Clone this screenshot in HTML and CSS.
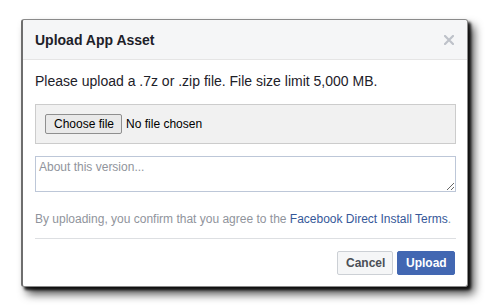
FILE: index.html
```html
<!DOCTYPE html>
<html>
<head>
<meta charset="utf-8">
<link rel="stylesheet" href="styles.css">
</head>
<body>
<div class="dialog">
  <div class="header">
    <span class="title">Upload App Asset</span>
    <svg class="close" width="10" height="10" viewBox="0 0 10 10" aria-label="Close">
      <path d="M1 1 L9 9 M9 1 L1 9" stroke="#bec2c9" stroke-width="2.2" stroke-linecap="square"/>
    </svg>
  </div>
  <div class="body">
    <p class="intro">Please upload a .7z or .zip file. File size limit 5,000 MB.</p>
    <div class="filebox">
      <span class="choose">Choose file</span>
      <span class="nofile">No file chosen</span>
    </div>
    <textarea class="notes" placeholder="About this version..."></textarea>
    <p class="terms">By uploading, you confirm that you agree to the <a href="#">Facebook Direct Install Terms</a>.</p>
    <div class="footer">
      <button class="btn cancel">Cancel</button>
      <button class="btn upload">Upload</button>
    </div>
  </div>
</div>
</body>
</html>
```
FILE: styles.css
```css
html, body {
  margin: 0;
  padding: 0;
  background: #ffffff;
}
body {
  font-family: "Liberation Sans", Arial, sans-serif;
  padding: 19px 0 0 21px;
  min-height: 307px;
  box-sizing: border-box;
}
.dialog {
  width: 444px;
  height: 266px;
  background: #fff;
  border: 1px solid #8a8a8a;
  border-left: 2px solid #6e6e6e;
  border-radius: 3px;
  box-shadow: 3px 3px 3px rgba(0,0,0,0.85), 6px 7px 10px rgba(0,0,0,0.7);
  display: flex;
  flex-direction: column;
  box-sizing: content-box;
}
.header {
  height: 39px;
  background: #f5f6f7;
  border-bottom: 1px solid #e5e5e5;
  border-radius: 3px 3px 0 0;
  display: flex;
  align-items: center;
  justify-content: space-between;
  padding: 0 13px 0 12px;
}
.title {
  font-weight: bold;
  font-size: 14px;
  color: #1d2129;
}
.close {
  display: block;
}
.body {
  padding: 12px 11px 0 12px;
  display: flex;
  flex-direction: column;
}
.intro {
  margin: 0;
  font-size: 14px;
  line-height: 18px;
  color: #1d2129;
}
.filebox {
  margin-top: 14px;
  height: 38px;
  background: #f1f1f1;
  border: 1px solid #cccccc;
  display: flex;
  align-items: center;
  padding-left: 9px;
}
.choose {
  font-size: 12px;
  color: #000;
  background: #e9e9e9;
  border: 1px solid #8f8f8f;
  border-radius: 2px;
  padding: 2px 7px 2px 8px;
  line-height: 14px;
}
.nofile {
  font-size: 12px;
  color: #000;
  margin-left: 4px;
}
.notes {
  margin: 12px 0 0 0;
  height: 36px;
  box-sizing: border-box;
  border: 1px solid #bdc7d8;
  border-radius: 0;
  padding: 3px 3px;
  font-family: "Liberation Sans", Arial, sans-serif;
  font-size: 12px;
  color: #1d2129;
  width: 100%;
  outline: none;
}
.notes::placeholder {
  color: #90949c;
}
.terms {
  margin: 19px 0 0 0;
  font-size: 12px;
  line-height: 16px;
  color: #90949c;
}
.terms a {
  color: #365899;
  text-decoration: none;
}
.footer {
  margin-top: 11px;
  border-top: 1px solid #dddfe2;
  padding-top: 12px;
  display: flex;
  justify-content: flex-end;
  gap: 4px;
  padding-right: 1px;
}
.btn {
  height: 24px;
  font-family: "Liberation Sans", Arial, sans-serif;
  font-weight: bold;
  font-size: 12px;
  border-radius: 2px;
  padding: 0 8px;
}
.cancel {
  background: #f5f6f7;
  border: 1px solid #ccd0d5;
  color: #4b4f56;
  width: 56px;
}
.upload {
  background: #4267b2;
  border: 1px solid #4267b2;
  color: #fff;
  width: 58px;
}
```
